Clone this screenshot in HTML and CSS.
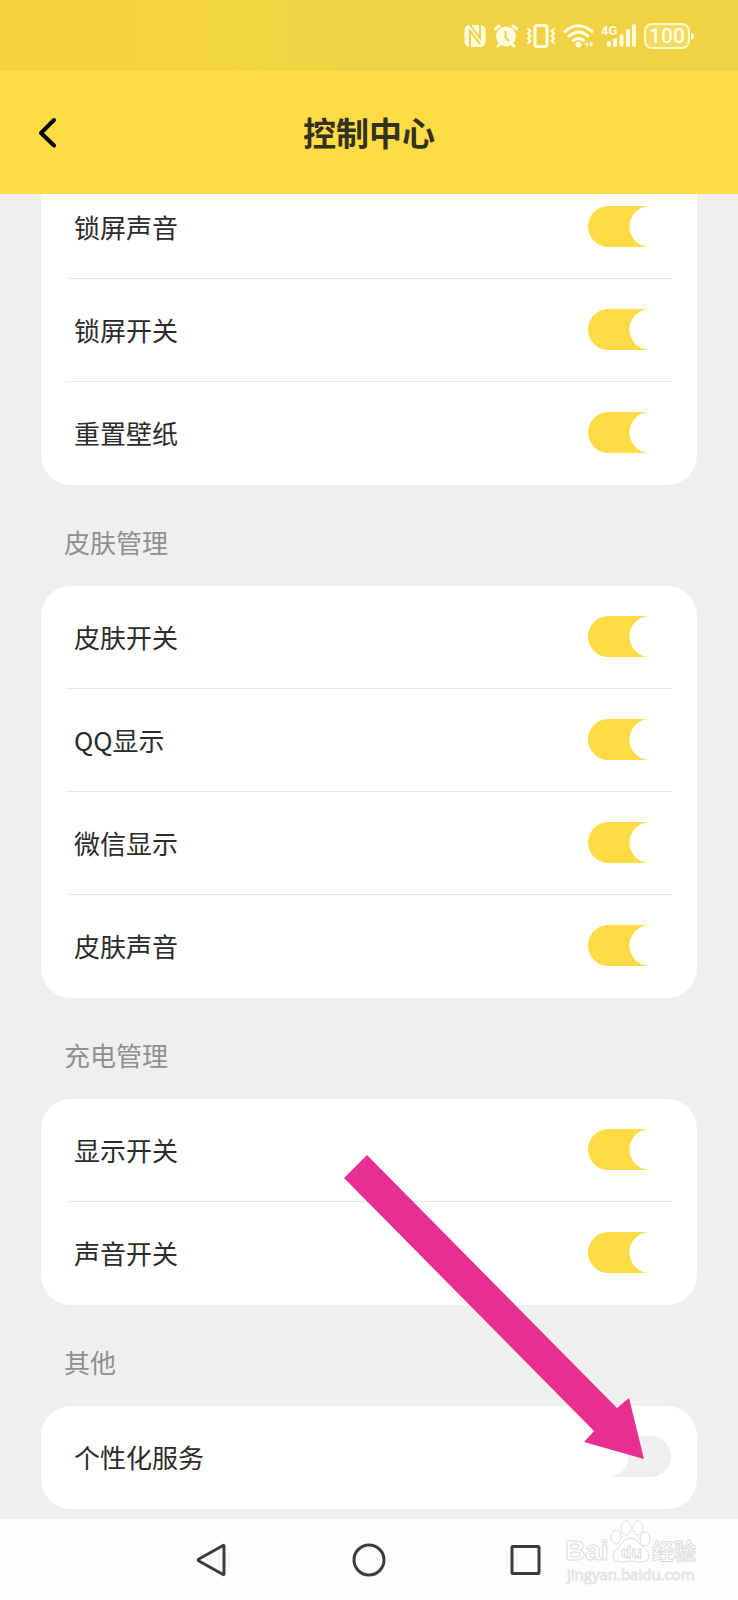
FILE: index.html
```html
<!DOCTYPE html>
<html lang="zh-CN">
<head>
<meta charset="utf-8">
<meta name="viewport" content="width=device-width, initial-scale=1">
<title>控制中心</title>
<link rel="stylesheet" href="styles.css">
</head>
<body>
<div class="screen">
  <div class="status-bar">
    <svg class="status-icon" width="22" height="26" viewBox="0 0 22 26" aria-label="NFC">
      <rect class="fill" x="0.500" y="2" width="21" height="22" rx="5"/>
      <path class="cut" d="M6 24V8L16 21M6 2L16 15V2"/>
    </svg>
    <svg class="status-icon" width="26" height="26" viewBox="0 0 26 26" aria-label="闹钟">
      <circle class="fill" cx="13" cy="13.500" r="10"/>
      <path class="line" d="M2.500 6L6 3M23.500 6L20 3M5 23L7.500 20.500M21 23L18.500 20.500"/>
      <path class="hand" d="M12.500 8V14L16 18"/>
    </svg>
    <svg class="status-icon" width="30" height="26" viewBox="0 0 30 26" aria-label="振动">
      <rect class="line" x="9" y="2.500" width="12" height="21" rx="2"/>
      <path class="line thin" d="M2 6L4.500 8L2 10.500L4.500 13L2 15.500L4.500 18L2 20M28 6L25.500 8L28 10.500L25.500 13L28 15.500L25.500 18L28 20"/>
    </svg>
    <svg class="status-icon" width="31" height="26" viewBox="0 0 31 26" aria-label="无线网络">
      <path class="line" d="M2 8.500Q15.500-3 29 8.500M6 13Q15.500 5 25 13M10.500 17.500Q15.500 13.500 20.500 17.500"/>
      <circle class="fill" cx="15.500" cy="21.500" r="3"/>
      <path class="fill" d="M25 18.500V24L21.500 21.200ZM27 18.500V24L30.500 21.200Z"/>
    </svg>
    <svg class="status-icon" width="36" height="26" viewBox="0 0 36 26" aria-label="4G 信号">
      <text class="network" x="0" y="12">4G</text>
      <path class="line bars" d="M8 20V22M14 17V22M20.500 13V22M27 8V22M33 3V22"/>
    </svg>
    <div class="battery">100</div>
  </div>

  <header class="header">
    <button class="back" type="button" aria-label="返回">
      <svg width="20" height="32" viewBox="0 0 20 32"><path d="M17 3L4 16L17 28.500"/></svg>
    </button>
    <h1 class="title">控制中心</h1>
  </header>

  <main class="content">
    <section class="card card-continued">
      <label class="row">锁屏声音<input class="switch" type="checkbox" checked></label>
      <label class="row">锁屏开关<input class="switch" type="checkbox" checked></label>
      <label class="row">重置壁纸<input class="switch" type="checkbox" checked></label>
    </section>

    <h2 class="group-title">皮肤管理</h2>
    <section class="card">
      <label class="row">皮肤开关<input class="switch" type="checkbox" checked></label>
      <label class="row">QQ显示<input class="switch" type="checkbox" checked></label>
      <label class="row">微信显示<input class="switch" type="checkbox" checked></label>
      <label class="row">皮肤声音<input class="switch" type="checkbox" checked></label>
    </section>

    <h2 class="group-title">充电管理</h2>
    <section class="card">
      <label class="row">显示开关<input class="switch" type="checkbox" checked></label>
      <label class="row">声音开关<input class="switch" type="checkbox" checked></label>
    </section>

    <h2 class="group-title">其他</h2>
    <section class="card">
      <label class="row">个性化服务<input class="switch" type="checkbox"></label>
    </section>

    <svg class="pointer" width="300" height="304" viewBox="0 0 300 304" aria-hidden="true">
      <path d="M0 23L23 0L273 253L285 243L300 304L240 287L250 276Z"/>
    </svg>
  </main>

  <nav class="nav">
    <button class="nav-button" type="button" aria-label="返回">
      <svg width="36" height="36" viewBox="0 0 36 36"><path d="M29 3.500Q30 3 30 4.500V31.500Q30 33 29 32.500L5 19Q3.500 18 5 17Z"/></svg>
    </button>
    <button class="nav-button" type="button" aria-label="主屏幕">
      <svg width="36" height="36" viewBox="0 0 36 36"><circle cx="18" cy="18" r="15"/></svg>
    </button>
    <button class="nav-button" type="button" aria-label="最近任务">
      <svg width="36" height="36" viewBox="0 0 36 36"><rect x="4" y="4.500" width="27" height="27" rx="1"/></svg>
    </button>
    <svg class="watermark" width="136" height="68" viewBox="0 0 136 68">
      <text class="mark-latin" x="1" y="41">Bai</text>
      <ellipse cx="52" cy="18" rx="5" ry="7"/>
      <ellipse cx="62" cy="9" rx="5" ry="7"/>
      <ellipse cx="74" cy="9" rx="5" ry="7"/>
      <ellipse cx="81" cy="20" rx="5" ry="7"/>
      <path d="M56 26Q66 12 77 26L84 33Q88 43 76 43Q67 41 58 43Q46 43 50 33Z"/>
      <text class="mark-du" x="57" y="39">du</text>
      <text class="mark-han" x="88" y="40">经验</text>
      <text class="mark-url" x="3" y="61">jingyan.baidu.com</text>
    </svg>
  </nav>
</div>
</body>
</html>
```
FILE: styles.css
```css
* {
  box-sizing: border-box;
}

body {
  margin: 0;
  background: #efefef;
  color: #2b2b2b;
  font-family: "Noto Sans CJK SC", sans-serif;
}

button {
  padding: 0;
  border: 0;
  background: none;
}

svg {
  display: block;
}

.screen {
  display: flex;
  flex-direction: column;
  min-height: 100vh;
}

.status-bar {
  display: flex;
  align-items: center;
  justify-content: flex-end;
  gap: 7px;
  height: 71px;
  padding-right: 48px;
  background: linear-gradient(90deg, #f5d33f, #f4d544 35%, #f0d244 50%);
}

.status-icon .fill {
  fill: #fffce0;
}

.status-icon .line {
  fill: none;
  stroke: #fffce0;
  stroke-width: 3;
  stroke-linecap: round;
}

.status-icon .thin {
  stroke-width: 2;
}

.status-icon .bars {
  stroke-width: 4;
}

.status-icon .cut,
.status-icon .hand {
  fill: none;
  stroke: #f0d244;
  stroke-width: 2;
}

.network {
  fill: #fffce0;
  font: bold 13px Roboto, sans-serif;
}

.battery {
  position: relative;
  width: 46px;
  height: 26px;
  border: 2px solid #fff8c0;
  border-radius: 8px;
  background: #f3da60;
  color: #fffce0;
  font: 500 21px/22px Roboto, sans-serif;
  text-align: center;
}

.battery::after {
  content: "";
  position: absolute;
  top: 8px;
  right: -6px;
  width: 3px;
  height: 7px;
  border-radius: 0 3px 3px 0;
  background: #fff8c0;
}

.header {
  display: grid;
  grid-template-columns: 60px 1fr 60px;
  align-items: center;
  height: 123px;
  padding: 0 37px;
  background: #ffdb45;
}

.back {
  justify-self: start;
}

.back path {
  fill: none;
  stroke: #000;
  stroke-width: 4;
  stroke-linecap: round;
  stroke-linejoin: round;
}

.title {
  margin: 0;
  padding-bottom: 2px;
  color: #33301f;
  font-size: 33px;
  line-height: 40px;
  text-align: center;
}

.content {
  position: relative;
  flex: 1;
  padding: 0 41px 10px;
  overflow: hidden;
}

.card {
  padding: 0 25px;
  border-radius: 30px;
  background: #fff;
}

.card-continued {
  margin-top: -18px;
  border-radius: 0 0 30px 30px;
}

.row {
  display: flex;
  align-items: center;
  justify-content: space-between;
  height: 103px;
  padding: 0 1px 1px 8px;
  border-bottom: 1px solid #e8e8e8;
  font-size: 26px;
}

.row:last-child {
  border-bottom-color: transparent;
}

.switch {
  appearance: none;
  width: 83px;
  height: 41px;
  margin: 0;
  border-radius: 21px;
  background:
    radial-gradient(circle at 20px 50%, #fff 20px, transparent 21px),
    linear-gradient(90deg, #fff 20px, #efefef 20px);
}

.switch:checked {
  background:
    radial-gradient(circle at 62px 50%, #fff 20px, transparent 21px),
    linear-gradient(90deg, #ffdb45 62px, #fff 62px);
}

.group-title {
  height: 101px;
  margin: 0;
  padding: 38px 23px 0;
  color: #8f8f8f;
  font-size: 26px;
  font-weight: 400;
  line-height: 38px;
}

.pointer {
  position: absolute;
  right: 94px;
  bottom: 60px;
  fill: #e82f91;
}

.nav {
  position: relative;
  display: flex;
  align-items: center;
  justify-content: center;
  gap: 121px;
  height: 81px;
  background: #fdfdfd;
}

.nav-button svg {
  fill: none;
  stroke: #3c3c3c;
  stroke-width: 3;
}

.watermark {
  position: absolute;
  top: 0;
  right: 38px;
  fill: #fff;
  stroke: #dcdcdc;
  stroke-width: 1;
}

.mark-latin {
  font: bold 28px "Liberation Sans", sans-serif;
}

.mark-du {
  font: bold 17px "Liberation Sans", sans-serif;
}

.mark-han {
  font: bold 22px "Noto Sans CJK SC", sans-serif;
}

.mark-url {
  fill: #fafafa;
  stroke: #e4e4e4;
  font: 15px "Open Sans", sans-serif;
}
```
